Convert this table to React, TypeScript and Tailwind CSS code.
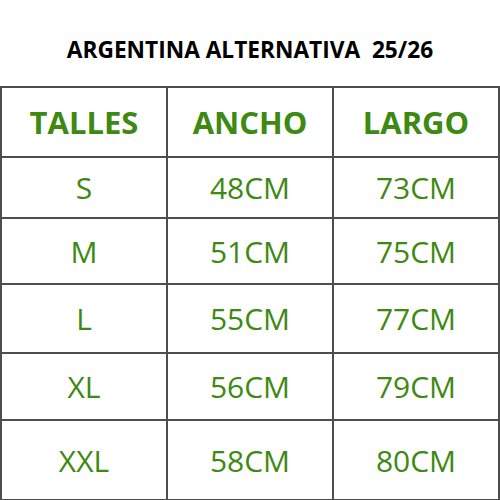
const rows = [
  { size: "S", ancho: "48CM", largo: "73CM", h: "h-[61px]" },
  { size: "M", ancho: "51CM", largo: "75CM", h: "h-[66px]" },
  { size: "L", ancho: "55CM", largo: "77CM", h: "h-[69px]" },
  { size: "XL", ancho: "56CM", largo: "79CM", h: "h-[67px]" },
  { size: "XXL", ancho: "58CM", largo: "80CM", h: "h-[80px]" },
];

const cell = "border-2 border-[#4d4d4d] text-center align-middle";

export default function App() {
  return (
    <div className="w-[500px] h-[500px] bg-white overflow-hidden font-['Open_Sans',sans-serif]">
      <div className="h-[86px] pt-[35px]">
        <h1 className="text-center text-[22.7px] leading-[30px] font-bold text-black whitespace-pre">
          ARGENTINA ALTERNATIVA  25/26
        </h1>
      </div>
      <table className="w-[500px] border-collapse table-fixed">
        <thead>
          <tr className="h-[70px]">
            {["TALLES", "ANCHO", "LARGO"].map((t) => (
              <th key={t} className={`${cell} text-[31px] font-bold text-[#3e8912]`}>
                {t}
              </th>
            ))}
          </tr>
        </thead>
        <tbody>
          {rows.map((r) => (
            <tr key={r.size} className={r.h}>
              <td className={`${cell} text-[30px] text-[#3e8912]`}>{r.size}</td>
              <td className={`${cell} text-[30px] text-[#3e8912]`}>{r.ancho}</td>
              <td className={`${cell} text-[30px] text-[#3e8912]`}>{r.largo}</td>
            </tr>
          ))}
        </tbody>
      </table>
    </div>
  );
}
